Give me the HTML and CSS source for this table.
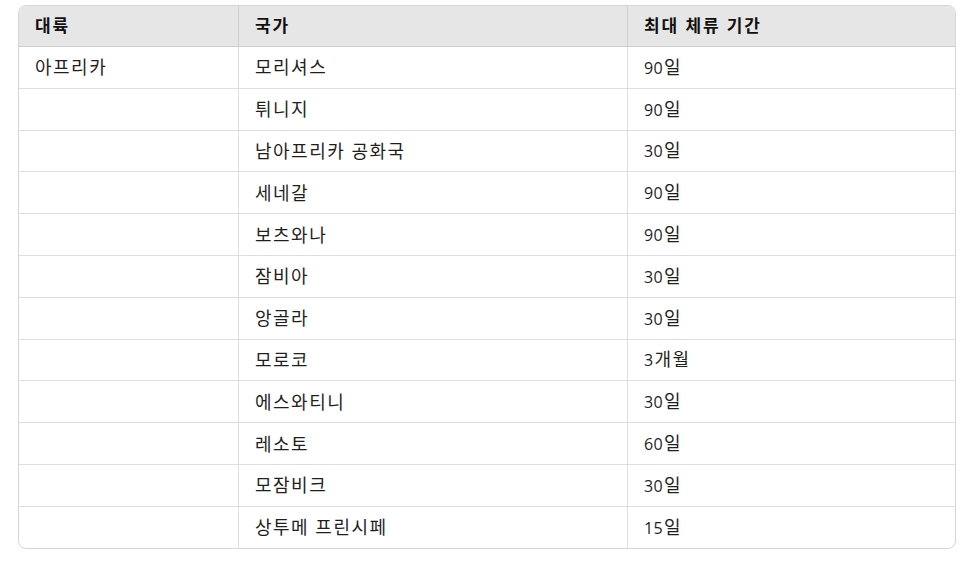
FILE: index.html
```html
<!DOCTYPE html>
<html lang="ko">
<head>
<meta charset="utf-8">
<link rel="stylesheet" href="styles.css">
</head>
<body>
<div class="wrap">
<table class="tbl">
<colgroup><col class="c1"><col class="c2"><col class="c3"></colgroup>
<thead>
<tr><th>대륙</th><th>국가</th><th>최대 체류 기간</th></tr>
</thead>
<tbody>
<tr><td>아프리카</td><td>모리셔스</td><td><span class="num">90</span>일</td></tr>
<tr><td></td><td>튀니지</td><td><span class="num">90</span>일</td></tr>
<tr><td></td><td>남아프리카 공화국</td><td><span class="num">30</span>일</td></tr>
<tr><td></td><td>세네갈</td><td><span class="num">90</span>일</td></tr>
<tr><td></td><td>보츠와나</td><td><span class="num">90</span>일</td></tr>
<tr><td></td><td>잠비아</td><td><span class="num">30</span>일</td></tr>
<tr><td></td><td>앙골라</td><td><span class="num">30</span>일</td></tr>
<tr><td></td><td>모로코</td><td><span class="num">3</span>개월</td></tr>
<tr><td></td><td>에스와티니</td><td><span class="num">30</span>일</td></tr>
<tr><td></td><td>레소토</td><td><span class="num">60</span>일</td></tr>
<tr><td></td><td>모잠비크</td><td><span class="num">30</span>일</td></tr>
<tr><td></td><td>상투메 프린시페</td><td><span class="num">15</span>일</td></tr>
</tbody>
</table>
</div>
</body>
</html>
```
FILE: styles.css
```css
html, body {
  margin: 0;
  padding: 0;
  background: #ffffff;
}
body {
  padding: 5px 12px 0 18px;
  font-family: "Open Sans", "Noto Sans CJK KR", sans-serif;
  font-size: 18px;
  letter-spacing: 1.5px;
  color: #1f1f1f;
}
.wrap {
  width: 938px;
  box-sizing: border-box;
  border: 1px solid #d6d6d6;
  border-radius: 8px;
  overflow: hidden;
}
.tbl {
  width: 100%;
  border-collapse: separate;
  border-spacing: 0;
  table-layout: fixed;
}
.c1 { width: 220px; }
.c2 { width: 389px; }
.c3 { width: auto; }
th, td {
  text-align: left;
  padding: 0 16px;
  height: 40.8px;
  line-height: 24px;
  border-bottom: 1px solid #dedede;
  border-right: 1px solid #dedede;
  vertical-align: middle;
  white-space: nowrap;
  font-weight: 400;
}
th:last-child, td:last-child { border-right: none; }
tbody tr:last-child td { border-bottom: none; }
th {
  background: #e6e6e6;
  font-weight: 700;
  font-size: 17px;
  letter-spacing: 1.9px;
  color: #111;
  height: 40px;
  border-bottom-color: #cfcfcf;
  border-right-color: #d0d0d0;
}
.num {
  font-size: 16px;
  letter-spacing: 0.3px;
  margin-right: 1px;
}
```
